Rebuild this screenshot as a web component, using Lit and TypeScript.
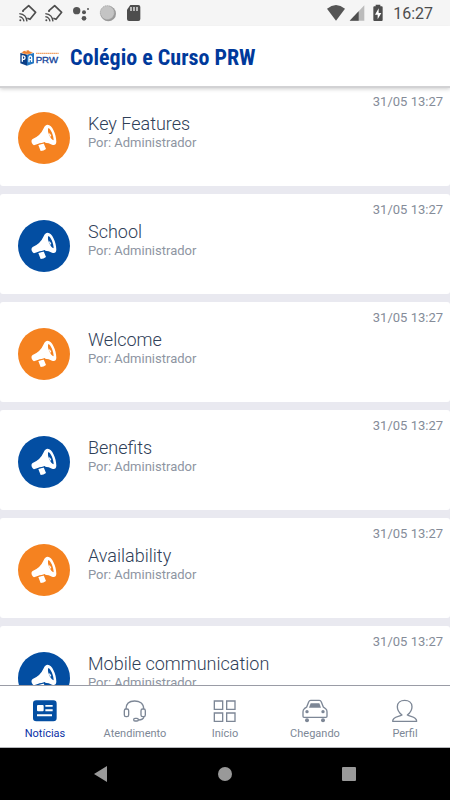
import { LitElement, html, svg, css } from "lit";
import { customElement, property } from "lit/decorators.js";
import { classMap } from "lit/directives/class-map.js";

interface NewsItem {
  title: string;
  author: string;
  date: string;
}

const NEWS: NewsItem[] = [
  "Key Features",
  "School",
  "Welcome",
  "Benefits",
  "Availability",
  "Mobile communication",
].map((title) => ({ title, author: "Administrador", date: "31/05 13:27" }));

const castIcon = html`<svg width="18" height="18" viewBox="0 0 54 54" fill="none" stroke="#4d4d4d" stroke-width="5">
  <path d="M12 20 29 5 50 25 33 46 25 43M12 18v6" stroke-linejoin="round" />
  <path d="M1 29q21 2 23 23M1 38q12 2 14 14" stroke-width="4" />
  <circle cx="4" cy="49" r="3" fill="#4d4d4d" stroke="none" />
</svg>`;

const TABS = [
  {
    label: "Notícias",
    icon: svg`<rect x="3" y="4" width="71" height="63" rx="10" fill="currentColor" stroke="none"/>
      <path fill="#fff" stroke="none" d="M18 18h14q3 0 3 3v13q0 3-3 3H18q-3 0-3-3V21q0-3 3-3zM40 18h22v5H40zM40 31h22v6H40zM15 46h45v6H15z"/>`,
  },
  {
    label: "Atendimento",
    icon: svg`<path d="M12 30C12 13 24 6 38 6s27 7 27 24M66 53q-2 10-17 10"/>
      <rect x="7" y="30" width="13" height="23" rx="5"/><rect x="57" y="30" width="13" height="23" rx="5"/>
      <rect x="35" y="58" width="14" height="8" rx="4"/>`,
  },
  {
    label: "Início",
    icon: svg`<path d="M7 6h25v25H7zM44 6h25v25H44zM7 42h25v25H7zM44 42h25v25H44z"/>`,
  },
  {
    label: "Chegando",
    icon: svg`<path d="M7 29 14 24 20 9q2-5 6-5h26q4 0 6 5l6 15 7 5q4 3 4 9v14q0 3-3 3H6q-3 0-3-3V38q0-6 4-9z"/>
      <path d="M26 13h26l5 13H21z" fill="currentColor" stroke="none"/>
      <circle cx="15" cy="38" r="5" fill="currentColor" stroke="none"/><circle cx="63" cy="38" r="5" fill="currentColor" stroke="none"/>
      <circle cx="15" cy="64" r="6" fill="currentColor" stroke="none"/><circle cx="63" cy="64" r="6" fill="currentColor" stroke="none"/>`,
  },
  {
    label: "Perfil",
    icon: svg`<path d="M30 48C20 40 16 32 16 23 16 11 26 4 38 4s22 7 22 19c0 9-4 17-14 25 10 6 28 3 28 19H2c0-16 18-13 28-19z" stroke-linejoin="round"/>`,
  },
];

@customElement("status-bar")
export class StatusBar extends LitElement {
  static styles = css`
    :host {
      display: flex;
      align-items: center;
      justify-content: space-between;
      height: 26px;
      padding: 0 17px 0 19px;
      background: #f5f5f5;
      color: #4d4d4d;
      flex: none;
    }
    .group {
      display: flex;
      align-items: center;
      gap: 8px;
    }
    .time {
      font-size: 16px;
      line-height: 24px;
      padding-top: 2px;
    }
    svg {
      display: block;
    }
    .signals {
      gap: 4px;
    }
  `;

  render() {
    return html`
      <div class="group">
        ${castIcon}${castIcon}
        <svg width="20" height="18" viewBox="0 0 60 54" fill="#555">
          <circle cx="17" cy="20" r="11" /><circle cx="39" cy="25" r="6" />
          <circle cx="51" cy="15" r="3" /><circle cx="39" cy="43" r="7" />
        </svg>
        <svg width="18" height="18" viewBox="0 0 54 54">
          <circle cx="28" cy="29" r="23" fill="#999" />
          <circle cx="25" cy="26" r="21" fill="#c4c4c4" stroke="#a4a4a4" stroke-width="3" stroke-dasharray="4 2" />
        </svg>
        <svg width="18" height="18" viewBox="0 0 54 54">
          <path d="M16 3h24q6 0 6 6v36q0 6-6 6H12q-6 0-6-6V17z" fill="#4d4d4d" />
          <path d="M18 9v12M27 9v12M36 9v12" stroke="#eee" stroke-width="4" />
        </svg>
      </div>
      <div class="group signals">
        <svg width="18" height="18" viewBox="0 0 54 54">
          <path d="M0 14Q27-8 54 14L27 50z" fill="#555" />
        </svg>
        <svg width="16" height="18" viewBox="0 0 48 54">
          <path d="M2 50 46 4v46z" fill="#bbb" /><path d="M2 50 29 22v28z" fill="#4d4d4d" />
        </svg>
        <svg width="20" height="18" viewBox="0 0 60 54">
          <path d="M20 2h14v5h4q3 0 3 3v38q0 3-3 3H16q-3 0-3-3V10q0-3 3-3h4z" fill="#4d4d4d" />
          <path d="M29 13 18 32h8v14l11-19h-8z" fill="#fff" />
        </svg>
        <span class="time">16:27</span>
      </div>
    `;
  }
}

@customElement("app-header")
export class AppHeader extends LitElement {
  static styles = css`
    :host {
      display: flex;
      align-items: center;
      gap: 10px;
      height: 60px;
      padding: 4px 20px 0;
      background: #fff;
      box-shadow: 0 2px 0 #d2d2d4, 0 3px 4px rgba(0, 0, 0, 0.2);
      box-sizing: border-box;
      position: relative;
      z-index: 1;
      flex: none;
    }
    .brand {
      display: block;
      width: 40px;
      height: 18px;
      flex: none;
    }
    .brand-text {
      font: 400 29px "Liberation Sans", Arial, sans-serif;
      fill: #15449a;
      stroke: #15449a;
    }
    h1 {
      margin: 0;
      font-family: "Roboto Condensed", "Liberation Sans Narrow", "Open Sans Condensed", Roboto, sans-serif;
      font-weight: 700;
      font-size: 22px;
      line-height: 28px;
      color: #00399b;
      white-space: nowrap;
    }
  `;

  render() {
    return html`
      <svg class="brand" viewBox="0 0 120 54" role="img" aria-label="PRW">
        <path d="M1 12 21 16v34L1 43z" fill="#0b3e86" />
        <path d="M21 16 42 12v31L21 50z" fill="#2477c2" />
        <path d="M2 11 22 3 41 11 21 17z" fill="#f7c9a0" />
        <path d="M6 10 13 5l6 4 5-6 6 6 6 0-4 5H12z" fill="#ef8231" />
        <path d="M7 38V21q8-1 8 5t-8 5M27 40V25q1-4 4-4t4 4v14M27 32h8" fill="none" stroke="#fff" stroke-width="4" />
        <path d="M48 13h68" stroke="#f1a468" stroke-width="4" stroke-dasharray="5 1" />
        <text class="brand-text" x="47" y="41">PRW</text>
      </svg>
      <h1>Colégio e Curso PRW</h1>
    `;
  }
}

@customElement("news-card")
export class NewsCard extends LitElement {
  @property({ attribute: false }) item!: NewsItem;
  @property({ type: Boolean, reflect: true }) blue = false;

  static styles = css`
    :host {
      display: block;
      --disc: #f58220;
    }
    :host([blue]) {
      --disc: #034ea2;
    }
    .card {
      display: grid;
      grid-template-columns: 52px 1fr auto;
      column-gap: 18px;
      height: 100px;
      padding: 0 7px 0 18px;
      box-sizing: border-box;
      background: #fff;
      border-radius: 3px;
    }
    .disc {
      display: block;
      width: 52px;
      height: 52px;
      margin-top: 26px;
    }
    .ring,
    .hole {
      fill: var(--disc);
    }
    .text {
      padding-top: 27px;
      white-space: nowrap;
    }
    h2 {
      margin: 0;
      font-weight: 300;
      font-size: 18px;
      line-height: 22px;
      color: #2f4058;
    }
    p {
      margin: 0;
      font-size: 13px;
      line-height: 16px;
      color: #8e95a2;
    }
    time {
      padding-top: 8px;
      font-size: 13px;
      line-height: 16px;
      color: #858c99;
    }
  `;

  render() {
    return html`
      <article class="card">
        <svg class="disc" viewBox="53 67 156 156" aria-hidden="true">
          <circle class="ring" cx="131" cy="145" r="78" />
          <path
            fill="#fff"
            d="M97 148Q120 139 130 116 134 105 142 105C155 105 168 133 168 156Q167 169 155 165 136 153 103 166 98 168 95 161 91 152 97 148zM113 164 130 161 137 178Q130 184 121 184z"
          />
          <path class="hole" d="M144 115C151 117 160 137 160 152 151 150 139 126 144 115zM111 164 134 157 135 160 112 167z" />
          <path fill="#fff" d="M145 130q6 1 8 9l-4 2z" />
        </svg>
        <div class="text">
          <h2>${this.item.title}</h2>
          <p>Por: ${this.item.author}</p>
        </div>
        <time>${this.item.date}</time>
      </article>
    `;
  }
}

@customElement("tab-bar")
export class TabBar extends LitElement {
  @property() active = "Notícias";

  static styles = css`
    :host {
      display: block;
      flex: none;
      background: #fff;
      border-top: 1px solid #9a9ca6;
      border-bottom: 1px solid #b5b7bb;
    }
    nav {
      display: grid;
      grid-template-columns: repeat(5, 1fr);
      height: 61px;
    }
    button {
      display: flex;
      flex-direction: column;
      align-items: center;
      gap: 3px;
      padding: 13px 0 0;
      border: 0;
      background: none;
      color: #7d8796;
      font: 11px/16px Roboto, sans-serif;
    }
    .active {
      color: #034ea2;
    }
    .active .label {
      color: #0a2fa6;
    }
    svg {
      width: 26px;
      height: 24px;
      fill: none;
      stroke: currentColor;
      stroke-width: 4;
    }
  `;

  render() {
    return html`<nav>
      ${TABS.map(
        (tab) => html`<button
          type="button"
          class=${classMap({ active: tab.label === this.active })}
          @click=${() => (this.active = tab.label)}
        >
          <svg viewBox="0 0 78 72" aria-hidden="true">${tab.icon}</svg>
          <span class="label">${tab.label}</span>
        </button>`
      )}
    </nav>`;
  }
}

@customElement("system-nav")
export class SystemNav extends LitElement {
  static styles = css`
    :host {
      display: flex;
      justify-content: center;
      align-items: center;
      height: 52px;
      background: #000;
      flex: none;
    }
    button {
      flex: 0 0 124px;
      display: flex;
      justify-content: center;
      padding: 0;
      border: 0;
      background: none;
    }
    svg {
      width: 16px;
      height: 16px;
      fill: #999;
    }
  `;

  render() {
    return html`
      <button type="button" aria-label="Voltar"><svg viewBox="0 0 16 16"><path d="M1 8 14 0v16z" /></svg></button>
      <button type="button" aria-label="Tela inicial"><svg viewBox="0 0 16 16"><circle cx="8" cy="8" r="7" /></svg></button>
      <button type="button" aria-label="Recentes"><svg viewBox="0 0 16 16"><rect x="1" y="1" width="14" height="14" rx="1" /></svg></button>
    `;
  }
}

@customElement("app-root")
export class AppRoot extends LitElement {
  static styles = css`
    :host {
      display: flex;
      flex-direction: column;
      height: 100vh;
      font-family: Roboto, sans-serif;
      background: #e9e9f0;
    }
    main {
      flex: 1;
      min-height: 0;
      overflow: hidden auto;
      scrollbar-width: none;
    }
    .news {
      display: grid;
      gap: 8px;
    }
  `;

  render() {
    return html`
      <status-bar></status-bar>
      <app-header></app-header>
      <main>
        <div class="news">
          ${NEWS.map((item, i) => html`<news-card .item=${item} ?blue=${i % 2 === 1}></news-card>`)}
        </div>
      </main>
      <tab-bar></tab-bar>
      <system-nav></system-nav>
    `;
  }
}
